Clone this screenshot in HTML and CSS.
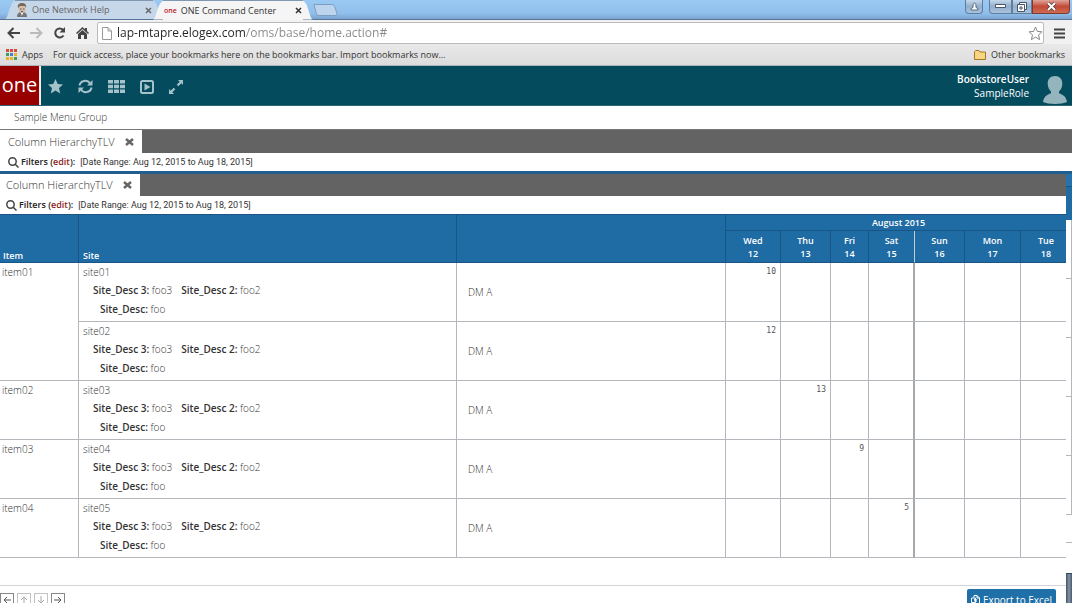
FILE: index.html
```html
<!DOCTYPE html>
<html lang="en">
<head>
<meta charset="utf-8">
<title>ONE Command Center</title>
<link rel="stylesheet" href="styles.css">
</head>
<body>
<div class="tabstrip">
  <div class="btab">
    <svg class="edge" viewBox="0 0 10 19"><path d="M0 19C4 18 4 3 10 .5V19z"/></svg>
    <div class="btab-body">
      <svg width="12" height="14" viewBox="0 0 12 14"><path d="M1 14c0-4 2-5 5-5s5 1 5 5z" fill="#777"/><ellipse cx="6" cy="5.500" rx="3.600" ry="4.500" fill="#d8bda9"/><path d="M2 5C1 1 4 0 6 0s5 1 4 5L9 3H4z" fill="#77685c"/><path d="M4 6h1.500M7 6h1.500M5 8.500h2" stroke="#555"/><path d="M5 10l1 3 1-3z" fill="#fff"/></svg>
      <span class="btab-title">One Network Help</span>
      <button class="tab-x" aria-label="Close tab"><svg width="7" height="7" viewBox="0 0 7 7"><path d="M1 1l5 5M6 1L1 6"/></svg></button>
    </div>
    <svg class="edge" viewBox="0 0 10 19"><path d="M10 19C6 18 6 3 0 .5V19z"/></svg>
  </div>
  <div class="btab current">
    <svg class="edge" viewBox="0 0 10 19"><path d="M0 19C4 18 4 3 10 .5V19z"/></svg>
    <div class="btab-body">
      <span class="mini-one">one</span>
      <span class="btab-title">ONE Command Center</span>
      <button class="tab-x" aria-label="Close tab"><svg width="7" height="7" viewBox="0 0 7 7"><path d="M1 1l5 5M6 1L1 6"/></svg></button>
    </div>
    <svg class="edge" viewBox="0 0 10 19"><path d="M10 19C6 18 6 3 0 .5V19z"/></svg>
  </div>
  <button class="newtab" aria-label="New tab"><svg width="25" height="12" viewBox="0 0 25 12"><path d="M1 .5h18q2 0 2.600 2l2.400 7q.5 2-2 2H6q-2 0-2.600-2z" fill="#bcd4ee" stroke="#7f9dbd"/></svg></button>
  <div class="winbtns">
    <button class="wb user" aria-label="Profile"><svg width="9" height="9" viewBox="0 0 9 9"><path d="M1 8V6.500l2-1V4C3 0 6 0 6 4v1.500l2 1V8z" fill="#fff" stroke="#556c86"/></svg></button>
    <button class="wb min" aria-label="Minimize"><svg width="11" height="5" viewBox="0 0 11 5"><path d="M.5.5h10v3H.5z" fill="#fff" stroke="#45566b"/></svg></button>
    <button class="wb max" aria-label="Restore"><svg width="10" height="10" viewBox="0 0 10 10"><path d="M2.500.5h7v7h-7z" fill="#fff" stroke="#45566b"/><path d="M.5 2.500h7v7h-7z" fill="#fff" stroke="#45566b"/><path d="M3 5h2v2H3z" stroke="#45566b" fill="none"/></svg></button>
    <button class="wb close" aria-label="Close"><svg width="9" height="9" viewBox="0 0 9 9"><path d="M1 1l7 7M8 1L1 8" stroke="#573737" stroke-width="3.500"/><path d="M1 1l7 7M8 1L1 8" stroke="#fff" stroke-width="2"/></svg></button>
  </div>
</div>
<div class="toolbar">
  <button aria-label="Back"><svg width="13" height="12" viewBox="0 0 13 12"><path d="M13 6H2M6.500 1L1.500 6l5 5" fill="none" stroke="#444" stroke-width="2"/></svg></button>
  <button aria-label="Forward"><svg width="13" height="12" viewBox="0 0 13 12"><path d="M0 6h11M6.500 1l5 5-5 5" fill="none" stroke="#bbb" stroke-width="2"/></svg></button>
  <button aria-label="Reload"><svg width="13" height="12" viewBox="0 0 13 12"><path d="M10.500 8.500A4.500 4.500 0 1 1 10 2.800" fill="none" stroke="#444" stroke-width="2"/><path d="M12 0v5.500H6.500z" fill="#444"/></svg></button>
  <button aria-label="Home"><svg width="13" height="12" viewBox="0 0 13 12"><path d="M6.500 0L0 6l1 1 5.500-5L12 7l1-1-2-2V1H9v1.300zM2 7l4.500-4L11 7v5H8V8H5v4H2z" fill="#444"/></svg></button>
  <div class="urlbox">
    <svg width="10" height="13" viewBox="0 0 10 13"><path d="M.5.5h5.500l3.500 3.500v8.500h-9zM6 .5V4h3.500" fill="#fff" stroke="#999"/></svg>
    <input class="url" type="text" aria-label="Address" value="lap-mtapre.elogex.com/oms/base/home.action#">
    <svg width="15" height="15" viewBox="0 0 15 15"><path d="M7.500 1l1.900 4.400 4.600.4-3.500 3.100 1.100 4.700-4.100-2.500-4.100 2.500 1.100-4.700L1 5.800l4.600-.4z" fill="#fff" stroke="#888"/></svg>
  </div>
  <button aria-label="Menu"><svg width="11" height="11" viewBox="0 0 11 11"><path d="M0 1.500h11M0 5.500h11M0 9.500h11" stroke="#444" stroke-width="2"/></svg></button>
</div>
<div class="bookmarks">
  <a href="#" class="bm"><svg width="11" height="11" viewBox="0 0 11 11"><path d="M0 0h3v3H0zM4 0h3v3H4zM8 0h3v3H8z" fill="#d64c3f"/><path d="M0 4h3v3H0zM8 8h3v3H8z" fill="#3f9e58"/><path d="M4 4h3v3H4z" fill="#4a7fd0"/><path d="M8 4h3v3H8zM0 8h3v3H0zM4 8h3v3H4z" fill="#e6b32e"/></svg>Apps</a>
  <span class="hint">For quick access, place your bookmarks here on the bookmarks bar.</span>
  <a href="#" class="bm">Import bookmarks now...</a>
  <a href="#" class="bm other"><svg width="12" height="10" viewBox="0 0 12 10"><path d="M.5 9.500v-8l1-1H5l1 1.500h5.500v7.500z" fill="#f8d580" stroke="#a4762c"/></svg>Other bookmarks</a>
</div>
<header class="appbar">
  <div class="logo">one</div>
  <nav class="tools">
    <button aria-label="Favorites"><svg width="15" height="15" viewBox="0 0 15 15"><path d="M7.500 0l2.200 4.900 5.300.5-4 3.600 1.200 5.400-4.700-2.800-4.700 2.800L4 9 0 5.400l5.300-.5z"/></svg></button>
    <button aria-label="Refresh"><svg width="15" height="15" viewBox="0 0 15 15"><path d="M1.500 6.500C2.500 1 9.500.5 12 4.500M13.500 8.500C12.500 14 5.500 14.500 3 10.500" fill="none" stroke="#a5c2ca" stroke-width="2"/><path d="M14.500 1v5.500H9zM.5 14V8.500H6z"/></svg></button>
    <button aria-label="Apps"><svg width="17" height="13" viewBox="0 0 17 13"><path d="M0 0h5v3.500H0zM6 0h5v3.500H6zM12 0h5v3.500h-5zM0 4.700h5v3.500H0zM6 4.700h5v3.500H6zM12 4.700h5v3.500h-5zM0 9.500h5V13H0zM6 9.500h5V13H6zM12 9.500h5V13h-5z"/></svg></button>
    <button aria-label="Run"><svg width="14" height="14" viewBox="0 0 14 14"><rect x="1" y="1" width="12" height="12" rx="1.500" fill="none" stroke="#a5c2ca" stroke-width="2"/><path d="M4.500 3.500l6 3.500-6 3.500z"/></svg></button>
    <button aria-label="Expand"><svg width="14" height="14" viewBox="0 0 14 14"><path d="M9 0h5v5l-1.700-1.700-3 3-1.600-1.600 3-3zM5 14H0V9l1.700 1.700 3-3 1.600 1.600-3 3z"/></svg></button>
  </nav>
  <div class="who"><strong>BookstoreUser</strong><span>SampleRole</span></div>
  <svg class="avatar" width="24" height="28" viewBox="0 0 24 28"><path d="M12 0c5 0 7.500 3.500 7.300 8-.2 4-1.800 6-3.300 7.500v1.800c4 1.500 7 3 8 8.700-5 2.600-19 2.600-24 0 1-5.700 4-7.200 8-8.700v-1.800C6.500 14 5 12 4.700 8 4.500 3.500 7 0 12 0z"/></svg>
</header>
<div class="menugroup">Sample Menu Group</div>
<div class="tabbar outer"><div class="ptab">Column HierarchyTLV<button aria-label="Close"><svg width="9" height="8" viewBox="0 0 9 8"><path d="M1 1l7 6M8 1L1 7"/></svg></button></div></div>
<div class="filters outer"><svg width="11" height="11" viewBox="0 0 11 11"><circle cx="4.500" cy="4.500" r="3.700"/><path d="M7 7l3.500 3.500"/></svg><span><b>Filters (<a href="#">edit</a>):</b></span><span class="range">[Date Range: Aug 12, 2015 to Aug 18, 2015]</span></div>
<div class="workspace">
  <main class="panel">
    <div class="tabbar"><div class="ptab">Column HierarchyTLV<button aria-label="Close"><svg width="9" height="8" viewBox="0 0 9 8"><path d="M1 1l7 6M8 1L1 7"/></svg></button></div></div>
    <div class="filters"><svg width="11" height="11" viewBox="0 0 11 11"><circle cx="4.500" cy="4.500" r="3.700"/><path d="M7 7l3.500 3.500"/></svg><span><b>Filters (<a href="#">edit</a>):</b></span><span class="range">[Date Range: Aug 12, 2015 to Aug 18, 2015]</span></div>
    <div class="gridwrap">
      <table class="grid">
        <colgroup><col class="c-item"><col><col class="c-dm"><col class="c-wed"><col class="c-thu"><col class="c-fri"><col class="c-sat"><col class="c-sun"><col class="c-mon"><col class="c-tue"></colgroup>
        <thead>
          <tr class="h1"><th rowspan="2" class="left">Item</th><th rowspan="2" class="left">Site</th><th rowspan="2"></th><th colspan="7" class="month">August 2015</th></tr>
          <tr class="h2"><th>Wed<br>12</th><th>Thu<br>13</th><th>Fri<br>14</th><th class="week">Sat<br>15</th><th>Sun<br>16</th><th>Mon<br>17</th><th>Tue<br>18</th></tr>
        </thead>
        <tbody>
          <tr><td rowspan="2">item01</td><td class="site">site01<p><b>Site_Desc 3:</b> foo3<b class="second">Site_Desc 2:</b> foo2</p><p class="third"><b>Site_Desc:</b> foo</p></td><td class="dm">DM A</td><td class="n">10</td><td class="n"></td><td class="n"></td><td class="n week"></td><td></td><td></td><td></td></tr>
          <tr><td class="site">site02<p><b>Site_Desc 3:</b> foo3<b class="second">Site_Desc 2:</b> foo2</p><p class="third"><b>Site_Desc:</b> foo</p></td><td class="dm">DM A</td><td class="n">12</td><td class="n"></td><td class="n"></td><td class="n week"></td><td></td><td></td><td></td></tr>
          <tr><td>item02</td><td class="site">site03<p><b>Site_Desc 3:</b> foo3<b class="second">Site_Desc 2:</b> foo2</p><p class="third"><b>Site_Desc:</b> foo</p></td><td class="dm">DM A</td><td class="n"></td><td class="n">13</td><td class="n"></td><td class="n week"></td><td></td><td></td><td></td></tr>
          <tr><td>item03</td><td class="site">site04<p><b>Site_Desc 3:</b> foo3<b class="second">Site_Desc 2:</b> foo2</p><p class="third"><b>Site_Desc:</b> foo</p></td><td class="dm">DM A</td><td class="n"></td><td class="n"></td><td class="n">9</td><td class="n week"></td><td></td><td></td><td></td></tr>
          <tr><td>item04</td><td class="site">site05<p><b>Site_Desc 3:</b> foo3<b class="second">Site_Desc 2:</b> foo2</p><p class="third"><b>Site_Desc:</b> foo</p></td><td class="dm">DM A</td><td class="n"></td><td class="n"></td><td class="n"></td><td class="n week">5</td><td></td><td></td><td></td></tr>
        </tbody>
      </table>
    </div>
    <footer class="foot">
      <button class="nav" aria-label="Left"><svg width="8" height="8" viewBox="0 0 8 8"><path d="M8 4H1M4 1L1 4l3 3"/></svg></button>
      <button class="nav off" aria-label="Up"><svg width="8" height="8" viewBox="0 0 8 8"><path d="M4 8V1M1 4l3-3 3 3"/></svg></button>
      <button class="nav off" aria-label="Down"><svg width="8" height="8" viewBox="0 0 8 8"><path d="M4 0v7M1 4l3 3 3-3"/></svg></button>
      <button class="nav" aria-label="Right"><svg width="8" height="8" viewBox="0 0 8 8"><path d="M0 4h7M4 1l3 3-3 3"/></svg></button>
      <button class="export"><svg width="9" height="10" viewBox="0 0 9 10"><path d="M3 2.500V.5h3L8.500 3v6.500H4M6 .5V3h2.500M.5 3h4v4.500h-4zM3 6l3-1.500M6 6.500L3 4" fill="none" stroke="#fff"/></svg>Export to Excel</button>
    </footer>
  </main>
  <aside class="behind"><div class="bh"></div><div class="bh2"></div><i></i><i></i><i></i><i></i><i></i><div class="bottomline"></div><div class="thumb"></div></aside>
</div>
</body>
</html>
```
FILE: styles.css
```css
* { box-sizing: border-box; }
body { margin: 0; height: 100vh; overflow: hidden; display: flex; flex-direction: column; background: #fff; color: #555; font: 10px/14px "Open Sans", sans-serif; }
button { border: 0; padding: 0; background: none; font: inherit; color: inherit; display: flex; align-items: center; justify-content: center; }
a { color: inherit; text-decoration: none; }
svg { flex: none; display: block; }

.tabstrip { flex: none; height: 20px; display: flex; align-items: flex-end; background: linear-gradient(#9ac9f3, #90bfec 70%, #7ba3cd); border-bottom: 1px solid #56759a; padding-left: 5px; }
.btab { display: flex; height: 19px; width: 158px; color: #666; }
.current { position: relative; width: 160px; margin-left: -10px; color: #333; height: 20px; margin-bottom: -1px; }
.edge { width: 10px; height: 100%; fill: #c6d7e9; }
.current .edge { fill: #f5f5f6; }
.btab-body { flex: 1; display: flex; align-items: center; gap: 4px; background: #c6d7e9; border-top: 1px solid #8097b0; padding: 0 1px; }
.current .btab-body { background: #f5f5f6; }
.btab-title { flex: 1; white-space: nowrap; font-size: 9px; }
.mini-one { color: #b5202a; font-weight: 600; font-size: 7px; line-height: 10px; }
.tab-x svg { stroke: currentColor; stroke-width: 1.500; }
.newtab { align-self: center; }
.winbtns { margin-left: auto; align-self: flex-start; display: flex; padding-right: 2px; }
.wb { height: 14px; border: 1px solid #5f7d9e; border-top: 0; background: linear-gradient(#c4d7ea, #93afcc 50%, #a9c3dd); }
.user { width: 18px; margin-right: 6px; border-radius: 0 0 4px 4px; }
.min { width: 23px; border-radius: 0 0 0 4px; }
.max { width: 20px; }
.close { width: 38px; border-color: #7b3a36; border-radius: 0 0 4px 0; background: linear-gradient(#e0a59a, #c24a36 50%, #cf6b50); }

.toolbar { flex: none; height: 24px; display: flex; align-items: center; gap: 10px; padding: 2px 7px 0; background: #f1f1f1; }
.urlbox { flex: 1; display: flex; align-items: center; gap: 5px; height: 22px; background: #fff; border: 1px solid #bbb; border-radius: 2px; padding: 0 0 0 4px; margin-left: -2px; }
.url { flex: 1; min-width: 0; border: 0; padding: 0; outline: 0; font: 12px/18px "Open Sans", sans-serif; color: transparent; background: linear-gradient(90deg, #222 128px, #888 128px); -webkit-background-clip: text; background-clip: text; }
.bookmarks { flex: none; height: 22px; display: flex; align-items: center; background: linear-gradient(#e9e9e9, #dcdcdc); border-bottom: 1px solid #aab4b8; padding: 0 7px 0 6px; color: #333; font-size: 9px; white-space: nowrap; }
.bm { display: flex; align-items: center; gap: 5px; }
.hint { margin: 0 2px 0 10px; }
.other { margin-left: auto; }

.appbar { flex: none; height: 40px; display: flex; align-items: center; background: #044b5e; padding-right: 5px; border-bottom: 1px solid #2c6372; }
.logo { align-self: stretch; width: 41px; background: #980000; color: #fff; border-right: 2px solid #eee; font: 20px/38px "Open Sans", sans-serif; text-align: center; }
.tools { display: flex; gap: 15px; padding: 2px 0 0 7px; fill: #a5c2ca; }
.who { margin-left: auto; display: flex; flex-direction: column; text-align: right; color: #fff; }
.who strong { font-weight: 600; }
.avatar { margin: 9px 0 0 14px; fill: #94b4be; }
.menugroup { flex: none; height: 23px; padding-left: 14px; line-height: 23px; font-weight: 300; color: #333; }

.tabbar { flex: none; display: flex; height: 22px; background: #636363; }
.ptab { display: flex; align-items: center; gap: 10px; background: #fff; padding: 0 8px 0 6px; font-size: 11px; font-weight: 300; color: #333; }
.ptab svg { stroke: #666; stroke-width: 2.500; }
.tabbar.outer { height: 24px; border-top: 1px solid #777; }
.outer .ptab { padding-left: 8px; }
.filters { flex: none; display: flex; align-items: center; height: 18px; padding-left: 6px; font-size: 9px; color: #222; gap: 2px; white-space: nowrap; }
.filters.outer { padding-left: 8px; }
.filters svg { fill: none; stroke: #444; stroke-width: 1.500; }
.filters a { color: #8e1b1b; }
.filters b { font-weight: 600; }
.range { margin-left: 3px; font-family: Roboto, sans-serif; color: #333; }

.workspace { flex: 1; min-height: 0; display: flex; border-top: 3px solid #205f90; }
.panel { flex: 1; min-width: 0; display: flex; flex-direction: column; overflow: hidden; }
.gridwrap { flex: none; overflow: hidden; }
.grid { width: calc(100% + 6px); table-layout: fixed; border-collapse: separate; border-spacing: 0; }
.c-item { width: 79px; } .c-dm { width: 269px; } .c-wed { width: 55px; } .c-mon { width: 56px; } .c-thu, .c-sun { width: 50px; }
.c-fri { width: 38px; } .c-sat { width: 46px; } .c-tue { width: 51px; }
.grid th { background: #1f6ba4; color: #fff; font-weight: 600; font-size: 9px; line-height: 13px; padding: 0; border-right: 1px solid #195686; border-bottom: 1px solid #195686; vertical-align: middle; }
.h1 th { border-top: 1px solid #195686; }
.h1 { height: 17px; }
.h2 { height: 32px; }
.grid th.left { text-align: left; vertical-align: bottom; padding-left: 3px; }
.grid th.left + .left { padding-left: 4px; }
.grid th.week { border-right: 1px solid #c2ccd4; }
.grid td { height: 59px; vertical-align: top; padding: 2px 2px 0; border-right: 1px solid #b4b7bb; border-bottom: 1px solid #b4b7bb; font-size: 10px; font-weight: 300; color: #333; line-height: 14px; }
.grid td.week { border-right: 2px solid #a5a8ac; }
.grid td.site { padding-left: 4px; }
.grid p { margin: 4px 0 0 10px; }
.grid p.third { margin: 5px 0 0 17px; }
.grid b { font-weight: 600; }
.grid b.second { margin-left: 9px; }
.grid td.dm { vertical-align: middle; padding: 0 0 0 11px; }
.grid td.n { text-align: right; padding-right: 4px; font-family: "DejaVu Sans Mono", monospace; font-size: 8px; color: #555; }
.foot { flex: none; display: flex; gap: 3px; margin-top: 27px; padding: 3px 10px 0 0; border-top: 1px solid #d5d5d8; }
.nav { width: 14px; height: 14px; margin-top: 4px; border: 1px solid #888; }
.nav svg { fill: none; stroke: #555; stroke-width: 1; }
.off { opacity: .5; }
.export { margin-left: auto; height: 22px; padding: 0 4px; gap: 3px; border-radius: 2px; background: #1f70a8; color: #fff; }

.behind { flex: none; width: 6px; display: flex; flex-direction: column; }
.bh { height: 13px; background: #2572ad; border-bottom: 1px solid #195686; }
.bh2 { height: 33px; background: #1f6ba4; }
.behind i { height: 59px; border-right: 1px solid #b4b7bb; border-bottom: 1px solid #b4b7bb; }
.bottomline { height: 28px; border-bottom: 1px solid #b4b7bb; }
.thumb { margin-top: 30px; flex: 1; background: linear-gradient(90deg, #3e5166, #8795a5 50%, #46586d); border-top: 1px solid #34465a; }
```
